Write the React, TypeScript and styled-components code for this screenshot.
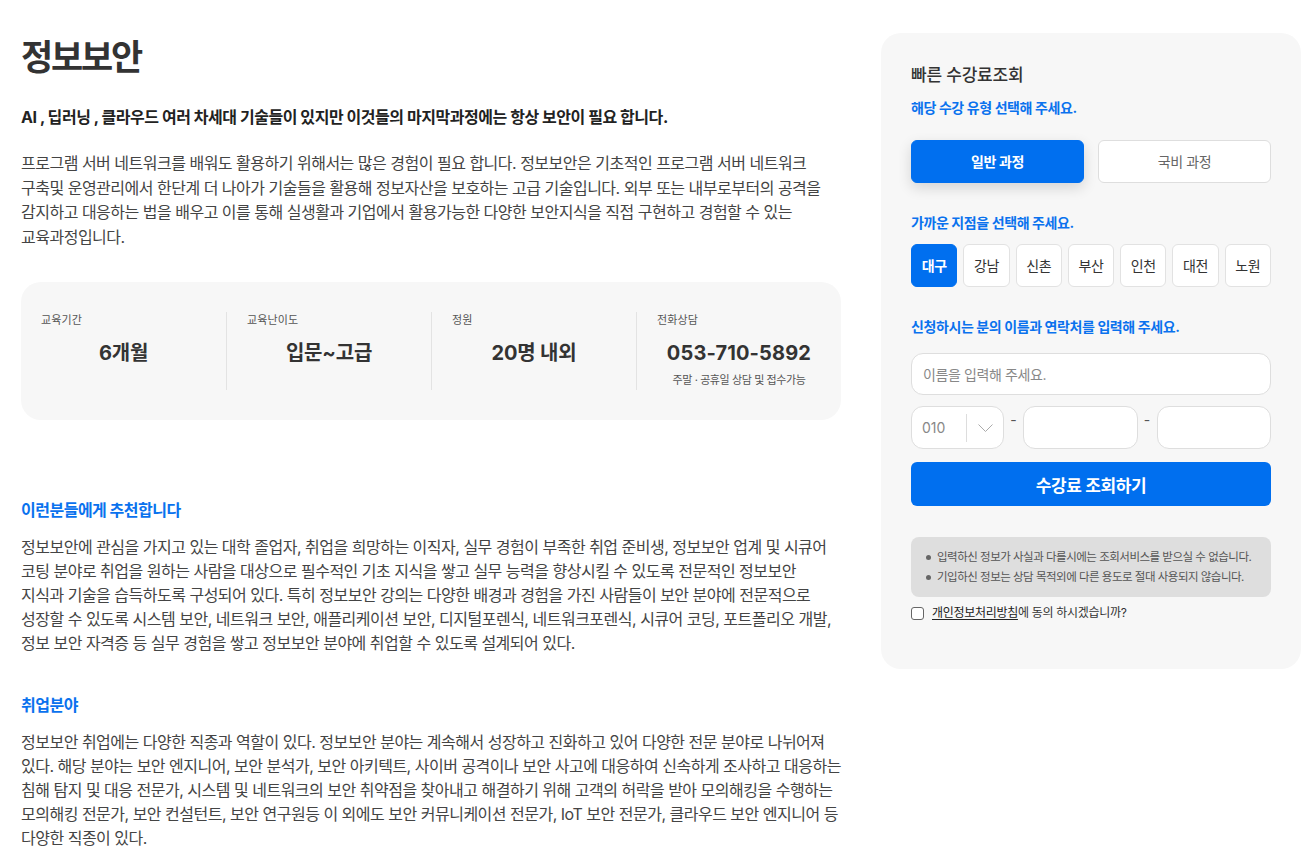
import React from "react";
import styled, { createGlobalStyle } from "styled-components";

const GlobalStyle = createGlobalStyle`
  html, body { margin: 0; padding: 0; background: #fff; overflow: hidden; }
  body {
    font-family: "Inter", "Noto Sans CJK KR", sans-serif;
    color: #333;
    word-break: keep-all;
    -webkit-font-smoothing: antialiased;
  }
  * { box-sizing: border-box; }
`;

const Page = styled.div`
  display: flex;
  align-items: flex-start;
  gap: 40px;
  padding: 33px 0 0 21px;
`;

const Main = styled.main`
  width: 820px;
  flex: none;
`;

const Title = styled.h1`
  margin: 4px 0 0;
  font-size: 35px;
  line-height: 40px;
  font-weight: 700;
  letter-spacing: -2.2px;
  color: #333;
`;

const Lead = styled.p`
  margin: 28px 0 0;
  font-size: 16px;
  line-height: 24px;
  font-weight: 700;
  letter-spacing: -0.45px;
  color: #222;
`;

const Body = styled.p<{ $top: number; $lh: number }>`
  margin: ${(p) => p.$top}px 0 0;
  font-size: 16px;
  line-height: ${(p) => p.$lh}px;
  letter-spacing: -0.5px;
  color: #444;
`;

const StatCard = styled.section`
  margin-top: 33px;
  display: grid;
  grid-template-columns: repeat(4, 1fr);
  padding: 30px 0;
  background: #f7f7f7;
  border-radius: 20px;
`;

const Stat = styled.div<{ $first?: boolean }>`
  height: 78px;
  padding: 0 20px;
  border-left: ${(p) => (p.$first ? "none" : "1px solid #e3e3e3")};
  display: flex;
  flex-direction: column;
`;

const StatLabel = styled.div`
  font-size: 11px;
  line-height: 16px;
  letter-spacing: 0.15px;
  color: #555;
`;

const StatValue = styled.div<{ $num?: boolean }>`
  margin-top: 11px;
  text-align: center;
  font-size: 20px;
  line-height: 28px;
  font-weight: 700;
  letter-spacing: ${(p) => (p.$num ? "0.15px" : "-0.2px")};
  color: #333;
`;

const StatNote = styled.div`
  margin-top: 5px;
  text-align: center;
  font-size: 11px;
  line-height: 16px;
  letter-spacing: -0.4px;
  color: #555;
`;

const SectionTitle = styled.h2<{ $top: number }>`
  margin: ${(p) => p.$top}px 0 0;
  font-size: 16px;
  line-height: 24px;
  font-weight: 700;
  letter-spacing: -0.5px;
  color: #0a72ee;
`;

const Aside = styled.aside`
  width: 420px;
  flex: none;
  background: #f7f7f7;
  border-radius: 20px;
  padding: 30px 30px 47px;
`;

const AsideTitle = styled.h3`
  margin: 0;
  font-size: 17px;
  line-height: 24px;
  font-weight: 500;
  letter-spacing: -0.2px;
  color: #333;
`;

const Guide = styled.p<{ $top: number }>`
  margin: ${(p) => p.$top}px 0 0;
  font-size: 14px;
  line-height: 20px;
  font-weight: 700;
  letter-spacing: -0.4px;
  color: #0a72ee;
`;

const CourseRow = styled.div`
  margin-top: 22px;
  display: grid;
  grid-template-columns: 1fr 1fr;
  gap: 14px;
`;

const CourseButton = styled.button<{ $active?: boolean }>`
  height: 43px;
  border-radius: 6px;
  border: 1px solid ${(p) => (p.$active ? "#006fef" : "#dedede")};
  background: ${(p) => (p.$active ? "#006fef" : "#fff")};
  color: ${(p) => (p.$active ? "#fff" : "#666")};
  font-family: inherit;
  font-size: 14px;
  font-weight: ${(p) => (p.$active ? 700 : 400)};
  letter-spacing: -0.4px;
  box-shadow: ${(p) => (p.$active ? "0 5px 14px rgba(0,0,0,0.14)" : "none")};
  padding: 0 0 2px;
`;

const BranchRow = styled.div`
  margin-top: 11px;
  display: grid;
  grid-template-columns: repeat(7, 1fr);
  gap: 6px;
`;

const BranchButton = styled.button<{ $active?: boolean }>`
  height: 43px;
  border-radius: 6px;
  border: 1px solid ${(p) => (p.$active ? "#006fef" : "#e2e2e2")};
  background: ${(p) => (p.$active ? "#006fef" : "#fff")};
  color: ${(p) => (p.$active ? "#fff" : "#333")};
  font-family: inherit;
  font-size: 14px;
  font-weight: ${(p) => (p.$active ? 700 : 400)};
  letter-spacing: -0.4px;
  padding: 0 0 2px;
`;

const NameInput = styled.input`
  margin-top: 16px;
  display: block;
  width: 100%;
  height: 42px;
  border: 1px solid #dedede;
  border-radius: 12px;
  background: #fff;
  padding: 0 11px;
  font-family: inherit;
  font-size: 14px;
  letter-spacing: -0.4px;
  color: #333;
  outline: none;
  &::placeholder { color: #888; }
`;

const PhoneRow = styled.div`
  margin-top: 11px;
  display: flex;
  align-items: flex-start;
`;

const PrefixSelect = styled.div`
  width: 93px;
  height: 43px;
  flex: none;
  display: flex;
  align-items: center;
  border: 1px solid #dedede;
  border-radius: 12px;
  background: #fff;
  padding-left: 10px;
  font-size: 14px;
  color: #888;
`;

const PrefixValue = styled.span`
  width: 44px;
`;

const PrefixDivider = styled.span`
  width: 1px;
  height: 28px;
  background: #ddd;
`;

const Chevron = styled.span`
  flex: 1;
  display: flex;
  justify-content: center;
  align-items: center;
`;

const Dash = styled.span`
  width: 19px;
  flex: none;
  margin-top: 4px;
  text-align: center;
  font-size: 14px;
  line-height: 20px;
  color: #555;
`;

const PhoneInput = styled.input`
  flex: 1;
  min-width: 0;
  height: 43px;
  border: 1px solid #dedede;
  border-radius: 12px;
  background: #fff;
  outline: none;
  font-family: inherit;
`;

const Submit = styled.button`
  margin-top: 13px;
  display: block;
  width: 100%;
  height: 44px;
  border: none;
  border-radius: 6px;
  background: #006fef;
  color: #fff;
  font-family: inherit;
  font-size: 17px;
  font-weight: 700;
  letter-spacing: -0.4px;
`;

const Notice = styled.ul`
  margin: 31px 0 0;
  padding: 10px 15px;
  list-style: none;
  background: #dedede;
  border-radius: 8px;
`;

const NoticeItem = styled.li`
  display: flex;
  align-items: center;
  gap: 6px;
  font-size: 11.5px;
  line-height: 20px;
  letter-spacing: -0.5px;
  color: #555;
  &::before {
    content: "";
    width: 5px;
    height: 5px;
    border-radius: 50%;
    background: #666;
    flex: none;
  }
`;

const AgreeRow = styled.label`
  margin-top: 7px;
  display: flex;
  align-items: center;
  gap: 8px;
  font-size: 12px;
  line-height: 18px;
  letter-spacing: -0.3px;
  color: #333;
`;

const Check = styled.input`
  appearance: none;
  margin: 0;
  width: 13px;
  height: 13px;
  border: 1px solid #666;
  border-radius: 3px;
  background: #fff;
`;

const PolicyLink = styled.span`
  text-decoration: underline;
  text-underline-offset: 2px;
  color: #222;
`;

const stats = [
  { label: "교육기간", value: "6개월" },
  { label: "교육난이도", value: "입문~고급" },
  { label: "정원", value: "20명 내외" },
];

const branches = ["대구", "강남", "신촌", "부산", "인천", "대전", "노원"];

export default function App() {
  return (
    <>
      <GlobalStyle />
      <Page>
        <Main>
          <Title>정보보안</Title>
          <Lead>AI , 딥러닝 , 클라우드 여러 차세대 기술들이 있지만 이것들의 마지막과정에는 항상 보안이 필요 합니다.</Lead>
          <Body $top={22} $lh={24.6}>
            프로그램 서버 네트워크를 배워도 활용하기 위해서는 많은 경험이 필요 합니다. 정보보안은 기초적인 프로그램 서버 네트워크
            구축및 운영관리에서 한단계 더 나아가 기술들을 활용해 정보자산을 보호하는 고급 기술입니다. 외부 또는 내부로부터의 공격을
            감지하고 대응하는 법을 배우고 이를 통해 실생활과 기업에서 활용가능한 다양한 보안지식을 직접 구현하고 경험할 수 있는
            교육과정입니다.
          </Body>
          <StatCard>
            {stats.map((s, i) => (
              <Stat key={s.label} $first={i === 0}>
                <StatLabel>{s.label}</StatLabel>
                <StatValue>{s.value}</StatValue>
              </Stat>
            ))}
            <Stat>
              <StatLabel>전화상담</StatLabel>
              <StatValue $num>053-710-5892</StatValue>
              <StatNote>주말 · 공휴일 상담 및 접수가능</StatNote>
            </Stat>
          </StatCard>
          <SectionTitle $top={78}>이런분들에게 추천합니다</SectionTitle>
          <Body $top={14} $lh={23.8}>
            정보보안에 관심을 가지고 있는 대학 졸업자, 취업을 희망하는 이직자, 실무 경험이 부족한 취업 준비생, 정보보안 업계 및 시큐어
            코팅 분야로 취업을 원하는 사람을 대상으로 필수적인 기초 지식을 쌓고 실무 능력을 향상시킬 수 있도록 전문적인 정보보안
            지식과 기술을 습득하도록 구성되어 있다. 특히 정보보안 강의는 다양한 배경과 경험을 가진 사람들이 보안 분야에 전문적으로
            성장할 수 있도록 시스템 보안, 네트워크 보안, 애플리케이션 보안, 디지털포렌식, 네트워크포렌식, 시큐어 코딩, 포트폴리오 개발,
            정보 보안 자격증 등 실무 경험을 쌓고 정보보안 분야에 취업할 수 있도록 설계되어 있다.
          </Body>
          <SectionTitle $top={38}>취업분야</SectionTitle>
          <Body $top={14} $lh={23.8}>
            정보보안 취업에는 다양한 직종과 역할이 있다. 정보보안 분야는 계속해서 성장하고 진화하고 있어 다양한 전문 분야로 나뉘어져
            있다. 해당 분야는 보안 엔지니어, 보안 분석가, 보안 아키텍트, 사이버 공격이나 보안 사고에 대응하여 신속하게 조사하고 대응하는
            침해 탐지 및 대응 전문가, 시스템 및 네트워크의 보안 취약점을 찾아내고 해결하기 위해 고객의 허락을 받아 모의해킹을 수행하는
            모의해킹 전문가, 보안 컨설턴트, 보안 연구원등 이 외에도 보안 커뮤니케이션 전문가, IoT 보안 전문가, 클라우드 보안 엔지니어 등
            다양한 직종이 있다.
          </Body>
        </Main>
        <Aside>
          <AsideTitle>빠른 수강료조회</AsideTitle>
          <Guide $top={11}>해당 수강 유형 선택해 주세요.</Guide>
          <CourseRow>
            <CourseButton $active>일반 과정</CourseButton>
            <CourseButton>국비 과정</CourseButton>
          </CourseRow>
          <Guide $top={30}>가까운 지점을 선택해 주세요.</Guide>
          <BranchRow>
            {branches.map((b, i) => (
              <BranchButton key={b} $active={i === 0}>
                {b}
              </BranchButton>
            ))}
          </BranchRow>
          <Guide $top={30}>신청하시는 분의 이름과 연락처를 입력해 주세요.</Guide>
          <NameInput placeholder="이름을 입력해 주세요." />
          <PhoneRow>
            <PrefixSelect>
              <PrefixValue>010</PrefixValue>
              <PrefixDivider />
              <Chevron>
                <svg width="15" height="8" viewBox="0 0 15 8" fill="none">
                  <polyline points="0.5,0.5 7.5,7.5 14.5,0.5" stroke="#aaa" strokeWidth="1" />
                </svg>
              </Chevron>
            </PrefixSelect>
            <Dash>-</Dash>
            <PhoneInput />
            <Dash>-</Dash>
            <PhoneInput />
          </PhoneRow>
          <Submit>수강료 조회하기</Submit>
          <Notice>
            <NoticeItem>입력하신 정보가 사실과 다를시에는 조회서비스를 받으실 수 없습니다.</NoticeItem>
            <NoticeItem>기입하신 정보는 상담 목적외에 다른 용도로 절대 사용되지 않습니다.</NoticeItem>
          </Notice>
          <AgreeRow>
            <Check type="checkbox" />
            <span>
              <PolicyLink>개인정보처리방침</PolicyLink>에 동의 하시겠습니까?
            </span>
          </AgreeRow>
        </Aside>
      </Page>
    </>
  );
}
